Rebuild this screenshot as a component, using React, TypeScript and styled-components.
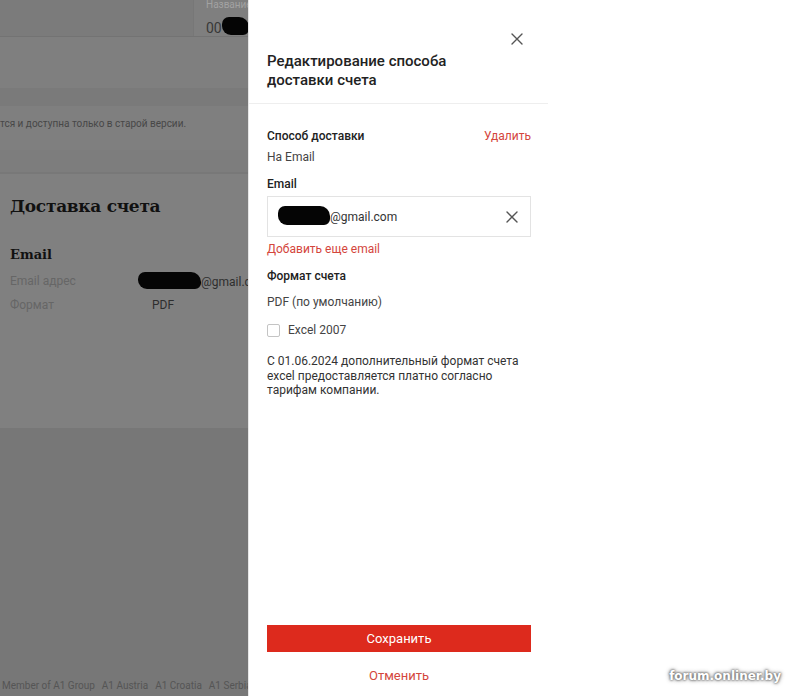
import React from 'react';
import styled, { createGlobalStyle } from 'styled-components';

const GlobalStyle = createGlobalStyle`
  html, body {
    margin: 0;
    padding: 0;
    background: #ffffff;
  }
  body {
    font-family: Roboto, "Liberation Sans", Arial, sans-serif;
  }
  * {
    box-sizing: border-box;
  }
`;

const Screen = styled.div`
  position: relative;
  width: 800px;
  height: 696px;
  overflow: hidden;
  background: #777777;
`;

/* dimmed page behind the drawer */

const Page = styled.div`
  display: flex;
  flex-direction: column;
  width: 800px;
  height: 696px;
`;

const TopBar = styled.div`
  display: flex;
  height: 37px;
  background: #7b7b7b;
  border-bottom: 1px solid #737373;
`;

const TopSpacer = styled.div`
  width: 193px;
`;

const InfoCard = styled.div`
  flex: 1;
  display: flex;
  flex-direction: column;
  padding: 0 12px;
  background: #7f7f7f;
  border-left: 1px solid #777777;
`;

const InfoLabel = styled.div`
  margin-top: -1px;
  font-size: 10px;
  line-height: 12px;
  color: #a2a2a2;
`;

const InfoValue = styled.div`
  margin-top: 4px;
  font-size: 14px;
  line-height: 16px;
  color: #383838;
  white-space: nowrap;
`;

const Band = styled.div<{ $h: number; $bg: string }>`
  height: ${p => p.$h}px;
  background: ${p => p.$bg};
`;

const Notice = styled.div`
  height: 44px;
  padding: 12px 0 0 0;
  background: #7f7f7f;
  font-size: 10px;
  line-height: 12px;
  color: #474747;
  white-space: nowrap;
`;

const DeliveryCard = styled.div`
  height: 256px;
  padding: 18px 10px 0;
  background: #808080;
  border-top: 2px solid #787878;
`;

const CardTitle = styled.h2`
  margin: 0;
  font-family: "DejaVu Serif", "Liberation Serif", serif;
  font-weight: 700;
  font-size: 17px;
  line-height: 28px;
  color: #111111;
  letter-spacing: -0.3px;
`;

const CardSubtitle = styled.h3`
  margin: 26px 0 0;
  font-family: "DejaVu Serif", "Liberation Serif", serif;
  font-weight: 700;
  font-size: 13px;
  line-height: 18px;
  color: #111111;
`;

const InfoGrid = styled.div`
  display: grid;
  grid-template-columns: 128px 1fr;
  row-gap: 7px;
  margin-top: 9px;
  font-size: 12px;
  line-height: 16px;
  white-space: nowrap;
`;

const GridLabel = styled.div`
  color: #666666;
`;

const GridValue = styled.div<{ $indent?: number }>`
  color: #2e2e2e;
  padding-left: ${p => p.$indent ?? 0}px;
  display: flex;
  align-items: center;
`;

const Redacted = styled.span<{ $w: number; $h: number; $shift?: number }>`
  display: inline-block;
  width: ${p => p.$w}px;
  height: ${p => p.$h}px;
  background: #050505;
  border-radius: 7px 10px 6px 9px;
  transform: translateY(${p => p.$shift ?? 0}px);
`;

const PageRest = styled.div`
  flex: 1;
  display: flex;
  align-items: flex-end;
  padding: 0 0 3px 2px;
  background: #777777;
`;

const FooterLinks = styled.div`
  display: flex;
  gap: 7px;
  font-size: 10px;
  line-height: 14px;
  color: #555555;
  white-space: nowrap;
`;

/* drawer */

const Drawer = styled.div`
  position: absolute;
  top: 0;
  right: 0;
  bottom: 0;
  left: 248px;
  display: flex;
  background: #ffffff;
`;

const Panel = styled.div`
  width: 300px;
  display: flex;
  flex-direction: column;
  border-left: 1px solid #e6e6e6;
`;

const Header = styled.div`
  display: flex;
  flex-direction: column;
  padding: 33px 17px 13px 18px;
  border-bottom: 1px solid #eeeeee;
`;

const CloseButton = styled.button`
  align-self: flex-end;
  width: 14px;
  height: 14px;
  margin: -1px 7px 6px 0;
  padding: 0;
  border: none;
  background: none;
  cursor: pointer;
  display: flex;
  align-items: center;
  justify-content: center;
`;

const Title = styled.h1`
  margin: 0;
  font-size: 15px;
  font-weight: 500;
  line-height: 19px;
  color: #222222;
`;

const Body = styled.div`
  flex: 1;
  display: flex;
  flex-direction: column;
  padding: 24px 17px 0 18px;
  font-size: 12px;
  line-height: 16px;
  color: #333333;
`;

const Row = styled.div`
  display: flex;
  justify-content: space-between;
  align-items: center;
`;

const Label = styled.div<{ $mt?: number }>`
  margin-top: ${p => p.$mt ?? 0}px;
  font-weight: 500;
  color: #222222;
`;

const Text = styled.div<{ $mt?: number }>`
  margin-top: ${p => p.$mt ?? 0}px;
  color: #444444;
`;

const RedLink = styled.a<{ $mt?: number }>`
  display: block;
  margin-top: ${p => p.$mt ?? 0}px;
  color: #d4463c;
  text-decoration: none;
  cursor: pointer;
`;

const Field = styled.div`
  display: flex;
  align-items: center;
  height: 41px;
  margin-top: 4px;
  padding: 0 11px 0 10px;
  border: 1px solid #e3e3e3;
  font-size: 12px;
  color: #333333;
`;

const FieldValue = styled.div`
  flex: 1;
  display: flex;
  align-items: center;
`;

const ClearButton = styled.button`
  width: 14px;
  height: 14px;
  padding: 0;
  border: none;
  background: none;
  display: flex;
  align-items: center;
  justify-content: center;
`;

const CheckRow = styled.label`
  display: flex;
  align-items: center;
  gap: 8px;
  margin-top: 12px;
  color: #444444;
`;

const CheckBox = styled.span`
  width: 13px;
  height: 13px;
  border: 1px solid #c4c4c4;
  border-radius: 2px;
  background: #ffffff;
`;

const Hint = styled.p`
  margin: 16px 0 0;
  font-size: 12px;
  line-height: 14.5px;
  color: #333333;
`;

const Footer = styled.div`
  display: flex;
  flex-direction: column;
  align-items: stretch;
  padding: 0 17px 12px 18px;
`;

const SaveButton = styled.button`
  height: 27px;
  border: none;
  background: #dd2a1d;
  color: #ffffff;
  font-family: inherit;
  font-size: 13px;
  cursor: pointer;
`;

const CancelLink = styled(RedLink)`
  text-align: center;
  font-size: 13px;
  line-height: 16px;
`;

const Blank = styled.div`
  flex: 1;
`;

const Watermark = styled.div`
  position: absolute;
  right: 19px;
  bottom: 12px;
  font-family: "DejaVu Sans", Verdana, sans-serif;
  font-weight: 700;
  font-size: 12px;
  line-height: 16px;
  color: #ffffff;
  text-shadow: 0 0 3px #6f6f6f, 0 0 5px #8a8a8a, 0 0 2px #555555;
`;

const Cross = ({ size, color }: { size: number; color: string }) => (
  <svg width={size} height={size} viewBox="0 0 12 12" fill="none">
    <path d="M1 1L11 11M11 1L1 11" stroke={color} strokeWidth="1.4" strokeLinecap="round" />
  </svg>
);

const App = () => {
  return (
    <>
      <GlobalStyle />
      <Screen>
        <Page>
          <TopBar>
            <TopSpacer />
            <InfoCard>
              <InfoLabel>Название</InfoLabel>
              <InfoValue>
                00<Redacted $w={27} $h={18} $shift={2} />
              </InfoValue>
            </InfoCard>
          </TopBar>
          <Band $h={51} $bg="#7f7f7f" />
          <Band $h={18} $bg="#7a7a7a" />
          <Notice>тся и доступна только в старой версии.</Notice>
          <Band $h={22} $bg="#7d7d7d" />
          <DeliveryCard>
            <CardTitle>Доставка счета</CardTitle>
            <CardSubtitle>Email</CardSubtitle>
            <InfoGrid>
              <GridLabel>Email адрес</GridLabel>
              <GridValue>
                <Redacted $w={63} $h={17} $shift={-1} />@gmail.com
              </GridValue>
              <GridLabel>Формат</GridLabel>
              <GridValue $indent={14}>PDF</GridValue>
            </InfoGrid>
          </DeliveryCard>
          <PageRest>
            <FooterLinks>
              <span>Member of A1 Group</span>
              <span>A1 Austria</span>
              <span>A1 Croatia</span>
              <span>A1 Serbia</span>
            </FooterLinks>
          </PageRest>
        </Page>

        <Drawer>
          <Panel>
            <Header>
              <CloseButton aria-label="Закрыть">
                <Cross size={12} color="#555555" />
              </CloseButton>
              <Title>
                Редактирование способа
                <br />
                доставки счета
              </Title>
            </Header>

            <Body>
              <Row>
                <Label>Способ доставки</Label>
                <RedLink>Удалить</RedLink>
              </Row>
              <Text $mt={5}>На Email</Text>

              <Label $mt={11}>Email</Label>
              <Field>
                <FieldValue>
                  <Redacted $w={52} $h={19} $shift={-1} />@gmail.com
                </FieldValue>
                <ClearButton aria-label="Очистить">
                  <Cross size={12} color="#555555" />
                </ClearButton>
              </Field>
              <RedLink $mt={4}>Добавить еще email</RedLink>

              <Label $mt={11}>Формат счета</Label>
              <Text $mt={10}>PDF (по умолчанию)</Text>
              <CheckRow>
                <CheckBox />
                Excel 2007
              </CheckRow>

              <Hint>
                С 01.06.2024 дополнительный формат счета excel предоставляется платно согласно
                тарифам компании.
              </Hint>
            </Body>

            <Footer>
              <SaveButton>Сохранить</SaveButton>
              <CancelLink $mt={16}>Отменить</CancelLink>
            </Footer>
          </Panel>
          <Blank />
        </Drawer>

        <Watermark>forum.onliner.by</Watermark>
      </Screen>
    </>
  );
};

export default App;
